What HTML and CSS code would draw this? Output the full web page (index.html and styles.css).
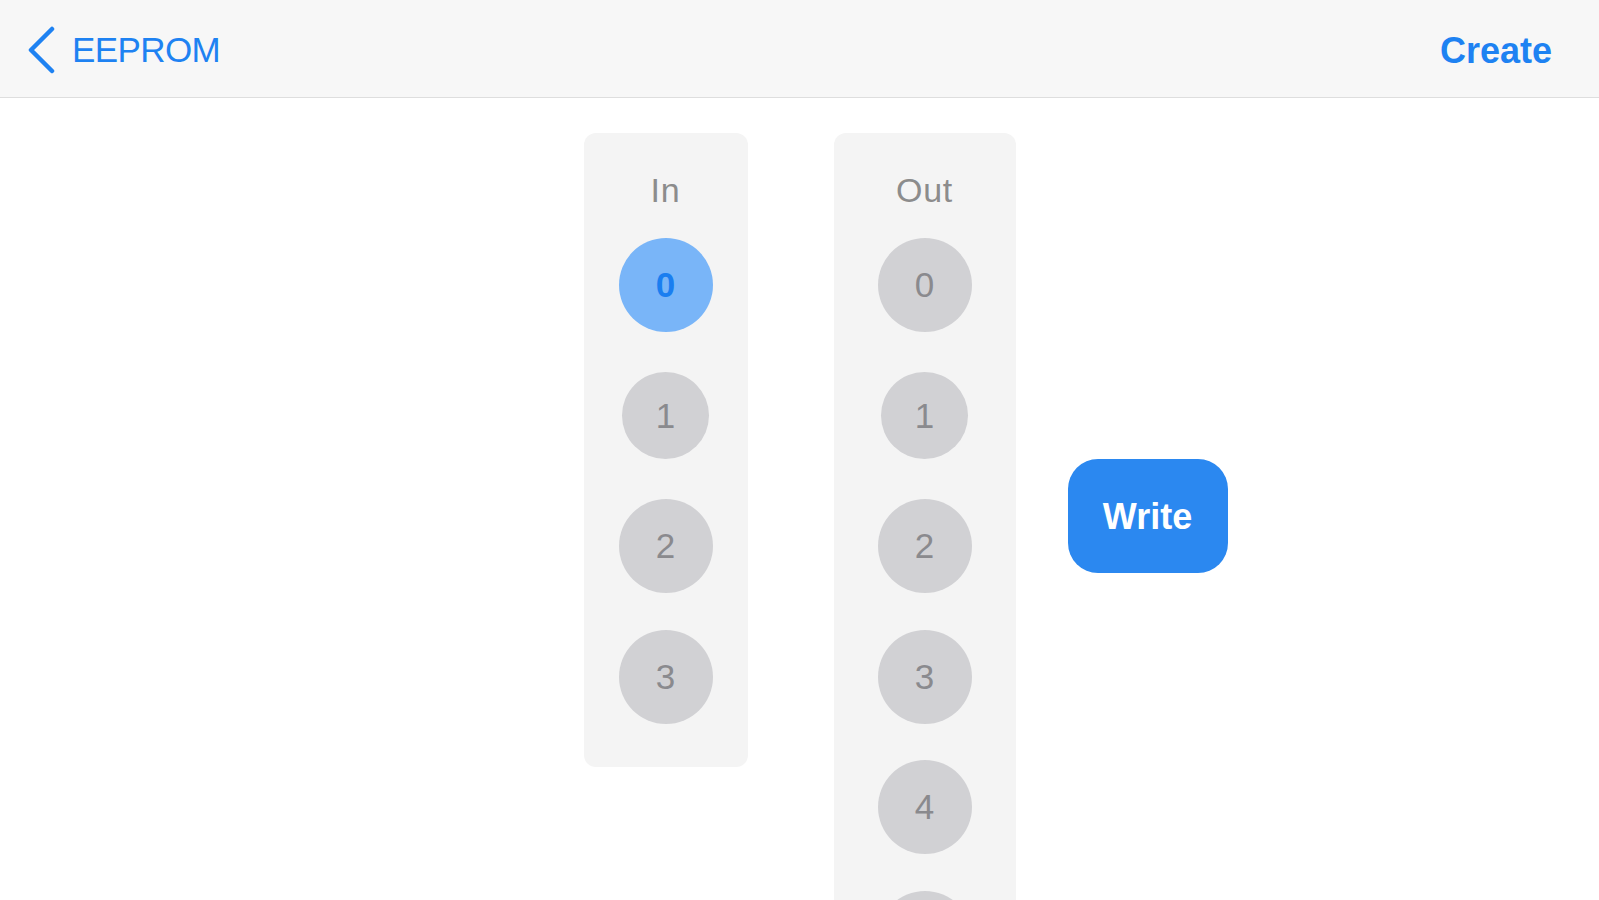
FILE: index.html
```html
<!DOCTYPE html>
<html>
<head>
    <title>EEPROM</title>
    <link rel="stylesheet" href="styles.css">
</head>
<body>
    <div class="navbar">
        <a class="back" href="#">
            <svg class="chevron" width="30" height="48" viewBox="0 0 30 48">
                <polyline points="25,3 4,24 25,45" fill="none" stroke="#1e82f2" stroke-width="4.5" stroke-linecap="round" stroke-linejoin="round"/>
            </svg>
            <span>EEPROM</span>
        </a>
        <a class="create" href="#">Create</a>
    </div>

    <div class="board">
        <div class="column column-in">
            <div class="column-title">In</div>
            <div class="pins">
                <div class="slot"><button class="pin selected">0</button></div>
                <div class="slot"><button class="pin narrow">1</button></div>
                <div class="slot"><button class="pin">2</button></div>
                <div class="slot"><button class="pin">3</button></div>
            </div>
        </div>

        <div class="column column-out">
            <div class="column-title">Out</div>
            <div class="pins">
                <div class="slot"><button class="pin">0</button></div>
                <div class="slot"><button class="pin narrow">1</button></div>
                <div class="slot"><button class="pin">2</button></div>
                <div class="slot"><button class="pin">3</button></div>
                <div class="slot"><button class="pin">4</button></div>
                <div class="slot"><button class="pin">5</button></div>
            </div>
        </div>

        <div class="actions">
            <button class="write">Write</button>
        </div>
    </div>
</body>
</html>
```

FILE: styles.css
```css
html, body {
    overflow: hidden;
}

body {
    margin: 0;
    padding: 0;
    background-color: #fff;
    font-family: 'Liberation Sans', Arial, sans-serif;
}

/* top bar */
.navbar {
    height: 97px;
    background-color: #f7f7f7;
    border-bottom: 1px solid #dedede;
    display: flex;
    align-items: center;
    justify-content: space-between;
    padding: 0 47px 0 27px;
}

.navbar a {
    color: #1e82f2;
    text-decoration: none;
}

.back {
    display: flex;
    align-items: center;
    gap: 15px;
    font-size: 35px;
    letter-spacing: -0.6px;
    margin-top: 3px;
}

.chevron {
    display: block;
}

.create {
    font-size: 36px;
    font-weight: bold;
    margin-top: 4px;
}

/* pin columns */
.board {
    display: grid;
    grid-template-columns: 1fr auto auto 1fr;
    align-items: start;
    padding-top: 35px;
}

.column {
    background-color: #f4f4f4;
    border-radius: 12px;
    padding: 37px 0 43px;
    display: flex;
    flex-direction: column;
    align-items: center;
}

.column-in {
    grid-column: 2;
    width: 164px;
    margin-right: 86px;
}

.column-out {
    grid-column: 3;
    width: 182px;
}

.column-title {
    font-size: 34px;
    line-height: 40px;
    color: #8c8c8c;
    letter-spacing: 0.8px;
    margin-bottom: 28px;
}

.pins {
    display: flex;
    flex-direction: column;
    gap: 36.6px;
}

.slot {
    width: 94px;
    height: 94px;
    display: flex;
    align-items: center;
    justify-content: center;
}

.pin {
    width: 94px;
    height: 94px;
    border-radius: 50%;
    border: none;
    padding: 0;
    background-color: #d1d1d4;
    color: #8a8a8e;
    font-family: 'Liberation Sans', Arial, sans-serif;
    font-size: 35px;
    cursor: pointer;
}

.pin.narrow {
    width: 87px;
    height: 87px;
}

.pin.selected {
    background-color: #79b5f8;
    color: #1a7ef0;
    font-weight: bold;
}

.actions {
    grid-column: 4;
    padding: 326px 0 0 52px;
}

.write {
    width: 160px;
    height: 114px;
    border: none;
    border-radius: 30px;
    background-color: #2b88f0;
    color: #fff;
    font-family: 'Liberation Sans', Arial, sans-serif;
    font-size: 36px;
    font-weight: bold;
    padding-top: 3px;
    cursor: pointer;
}
```
